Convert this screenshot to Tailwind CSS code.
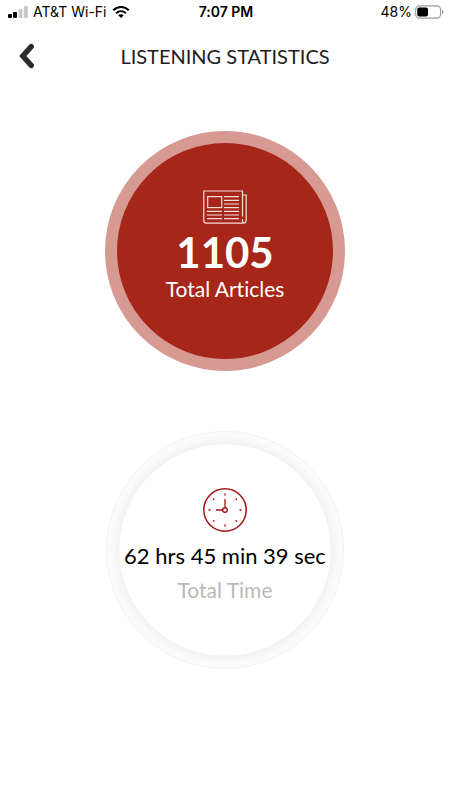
<!DOCTYPE html>
<html lang="en">
<head>
<meta charset="utf-8">
<meta name="viewport" content="width=device-width, initial-scale=1">
<title>Listening Statistics</title>
<script src="https://cdn.jsdelivr.net/npm/@tailwindcss/browser@4"></script>
</head>
<body class="min-h-screen bg-white font-['Lato',sans-serif] text-black [font-variant-ligatures:none]">
  <!-- Status bar -->
  <div class="grid h-6 grid-cols-[1fr_auto_1fr] items-center pl-2 pr-[6px] font-['Inter',sans-serif] text-[14px] leading-6">
    <div class="flex items-center gap-[5px]">
      <svg class="h-3 w-5" viewBox="0 0 20 12" role="img" aria-label="Signal">
        <rect x="0" y="8" width="4" height="4" rx="1" fill="#000"/>
        <rect x="5" y="6" width="4" height="6" rx="1" fill="#000"/>
        <rect x="10.500" y="3" width="4" height="9" rx="1" fill="#c9c9c9"/>
        <rect x="15.800" y="0" width="4" height="12" rx="1" fill="#c9c9c9"/>
      </svg>
      <span>AT&amp;T Wi-Fi</span>
      <svg class="h-3 w-[18px]" viewBox="0 0 18 12" role="img" aria-label="Wi-Fi">
        <path d="M1.200 4.300C5.600-.1 12.400-.1 16.800 4.300" fill="none" stroke="#000" stroke-width="2.200"/>
        <path d="M4.100 7.200c2.900-2.700 6.900-2.700 9.800 0" fill="none" stroke="#000" stroke-width="2.100"/>
        <path d="M6.300 9.200c1.600-1.400 3.800-1.400 5.400 0L9 12z" fill="#000"/>
      </svg>
    </div>
    <span class="font-semibold">7:07 PM</span>
    <div class="flex items-center justify-end gap-[3px]">
      <span>48%</span>
      <svg class="h-[14px] w-[29px]" viewBox="0 0 29 14" role="img" aria-label="Battery">
        <rect x=".7" y=".9" width="24.800" height="12.200" rx="3.600" fill="none" stroke="#999" stroke-width="1.100"/>
        <rect x="2.300" y="2.500" width="10.700" height="9" rx="1.800" fill="#000"/>
        <path d="M27 4.700c2 .6 2 4 0 4.600z" fill="#999"/>
      </svg>
    </div>
  </div>

  <header class="grid h-16 grid-cols-[1fr_auto_1fr] items-center px-4">
    <button type="button" aria-label="Back" class="flex h-8 w-8 items-center">
      <svg class="h-7 w-5" viewBox="0 0 20 28" fill="none" stroke="#2b2b2b" stroke-width="5.400" stroke-linecap="round" stroke-linejoin="miter">
        <path d="M15.200 4.600L6.800 14l8.400 9.400"/>
      </svg>
    </button>
    <h1 class="text-[20px] leading-8 text-[#1c1c1c]">LISTENING STATISTICS</h1>
  </header>

  <main class="flex flex-col items-center gap-[60px] pt-[43px]">
    <section class="flex size-60 flex-col items-center rounded-full border-[12px] border-[#d79a93] bg-[#a62619] pt-[47px] text-white">
      <svg class="h-[34px] w-11" viewBox="0 0 44 34" fill="none" stroke="#f3dcd9" stroke-width="1.200" aria-hidden="true">
        <path d="M39.500 26.500V1H.8v29.500q0 2.700 2.700 2.700h37q2.700 0 2.700-2.700V5h-3.700M39.500 29v1.500q0 2.400 1.800 2.700"/>
        <rect x="4.700" y="6.600" width="14" height="11"/>
        <path d="M21 6.700h15M21 10.300h15M21 14h15M21 17.700h15M21 21.300h15M21 25h15M21 28.700h15M4 21.300h15M4 25h15M4 28.700h15"/>
      </svg>
      <p class="mt-1 text-[42px] font-bold leading-[48px]">1105</p>
      <h2 class="text-[21px] leading-[26px]">Total Articles</h2>
    </section>

    <section class="flex size-[238px] flex-col items-center rounded-full border border-[#f2f2f2] bg-[radial-gradient(closest-side,#fff_89%,#f2f2f2_90%,#f9f9f9_95%,#fcfcfc_100%)] pt-14 whitespace-nowrap">
      <svg class="size-11" viewBox="0 0 44 44" fill="none" stroke="#a51414" aria-hidden="true">
        <circle cx="22" cy="22" r="21.200" stroke-width="1.500"/>
        <circle cx="22" cy="22" r="2.300" stroke-width="1.400"/>
        <path d="M22 11v8.700M13 22h6.700" stroke-width="1.300"/>
        <path d="M22 5.500v2M22 36.500v2M5.500 22h2M36.500 22h2M10 10.500l1.300 1.300M32.700 32.200l1.300 1.300M34 10.500l-1.300 1.300M11.300 32.200L10 33.500" stroke-width="1.400"/>
      </svg>
      <p class="mt-2 text-[22px] leading-8">62 hrs 45 min 39 sec</p>
      <h2 class="mt-[2px] text-[21px] leading-8 text-[#b9b9b9]">Total Time</h2>
    </section>
  </main>
</body>
</html>
